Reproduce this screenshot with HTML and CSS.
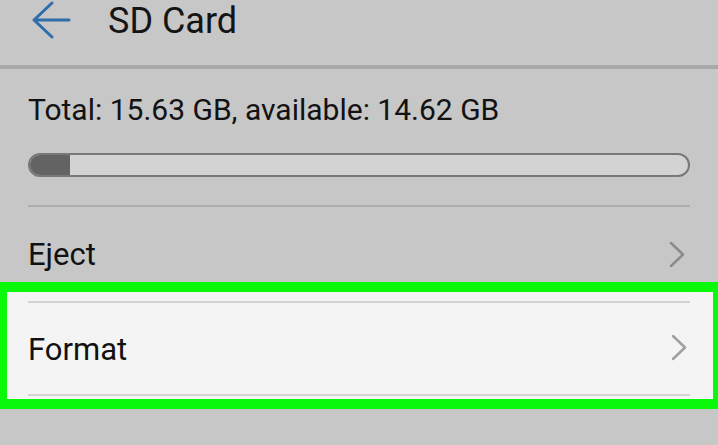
FILE: index.html
```html
<!DOCTYPE html>
<html>
<head>
<meta charset="utf-8">
<link rel="stylesheet" href="styles.css">
</head>
<body>
<div class="screen">
  <header class="header">
    <svg class="back" width="40" height="40" viewBox="0 0 40 40">
      <path d="M38 20 H3 M21 3 L3 20 L21 37" fill="none" stroke="#2f6dab" stroke-width="3" stroke-linecap="round" stroke-linejoin="round"/>
    </svg>
    <h1 class="title">SD Card</h1>
  </header>
  <section class="info">
    <p class="total">Total: 15.63 GB, available: 14.62 GB</p>
    <div class="bar"><div class="bar-fill" style="width:40px"></div></div>
    <div class="divider"></div>
  </section>
  <div class="row row-eject">
    <span class="label">Eject</span>
    <svg class="chev" width="17" height="27" viewBox="0 0 17 27"><path d="M2 2 L14 13.5 L2 25" fill="none" stroke="#8b8b8b" stroke-width="2.5" stroke-linecap="round" stroke-linejoin="round"/></svg>
  </div>
  <div class="highlight">
    <div class="divider light"></div>
    <div class="row row-format">
      <span class="label">Format</span>
      <svg class="chev" width="17" height="27" viewBox="0 0 17 27"><path d="M2 2 L14 13.5 L2 25" fill="none" stroke="#a0a0a0" stroke-width="2.5" stroke-linecap="round" stroke-linejoin="round"/></svg>
    </div>
    <div class="divider light"></div>
  </div>
  <div class="rest"></div>
</div>
</body>
</html>
```

FILE: styles.css
```css
* { box-sizing: border-box; }
html, body { margin: 0; padding: 0; }
body {
  background: #c7c7c7;
  font-family: Roboto, "Liberation Sans", sans-serif;
  color: #111;
  width: 718px;
  height: 445px;
  overflow: hidden;
}
.screen { display: flex; flex-direction: column; }
.header {
  height: 69px;
  border-bottom: 4px solid #a9a9a9;
  display: flex;
  align-items: flex-start;
}
.back { margin-left: 31px; margin-top: 0; }
.title {
  margin: 0 0 0 37px;
  font-size: 36px;
  font-weight: 400;
  line-height: 42px;
  color: #141414;
}
.info { padding-top: 23px; }
.total {
  margin: 0 0 0 28px;
  font-size: 30px;
  line-height: 36px;
  color: #121212;
}
.bar {
  margin: 25px 28px 0 28px;
  height: 24px;
  border: 2px solid #787878;
  border-radius: 12px;
  background: #d3d3d3;
  overflow: hidden;
}
.bar-fill { height: 100%; background: #636363; }
.divider {
  margin: 28px 28px 0 28px;
  height: 2px;
  background: #adadad;
}
.row {
  display: flex;
  align-items: center;
  justify-content: space-between;
  padding: 0 32px 0 28px;
}
.label { font-size: 31px; line-height: 36px; color: #111; }
.row-eject { padding-top: 30px; padding-bottom: 9px; }
.chev { margin-top: -2px; }
.highlight {
  background: #f4f4f4;
  border-style: solid;
  border-color: #0af90a;
  border-width: 10px 5px 10px 7px;
  height: 127px;
}
.divider.light { margin: 9px 23px 0 21px; background: #d3d3d3; }
.row-format { padding: 29px 25px 0 21px; height: 91px; align-items: flex-start; }
.row-format .chev { margin-top: 2px; }
.row-format + .divider.light { margin-top: 0; }
.rest { flex: 1; background: #c4c4c4; height: 40px; }
```
